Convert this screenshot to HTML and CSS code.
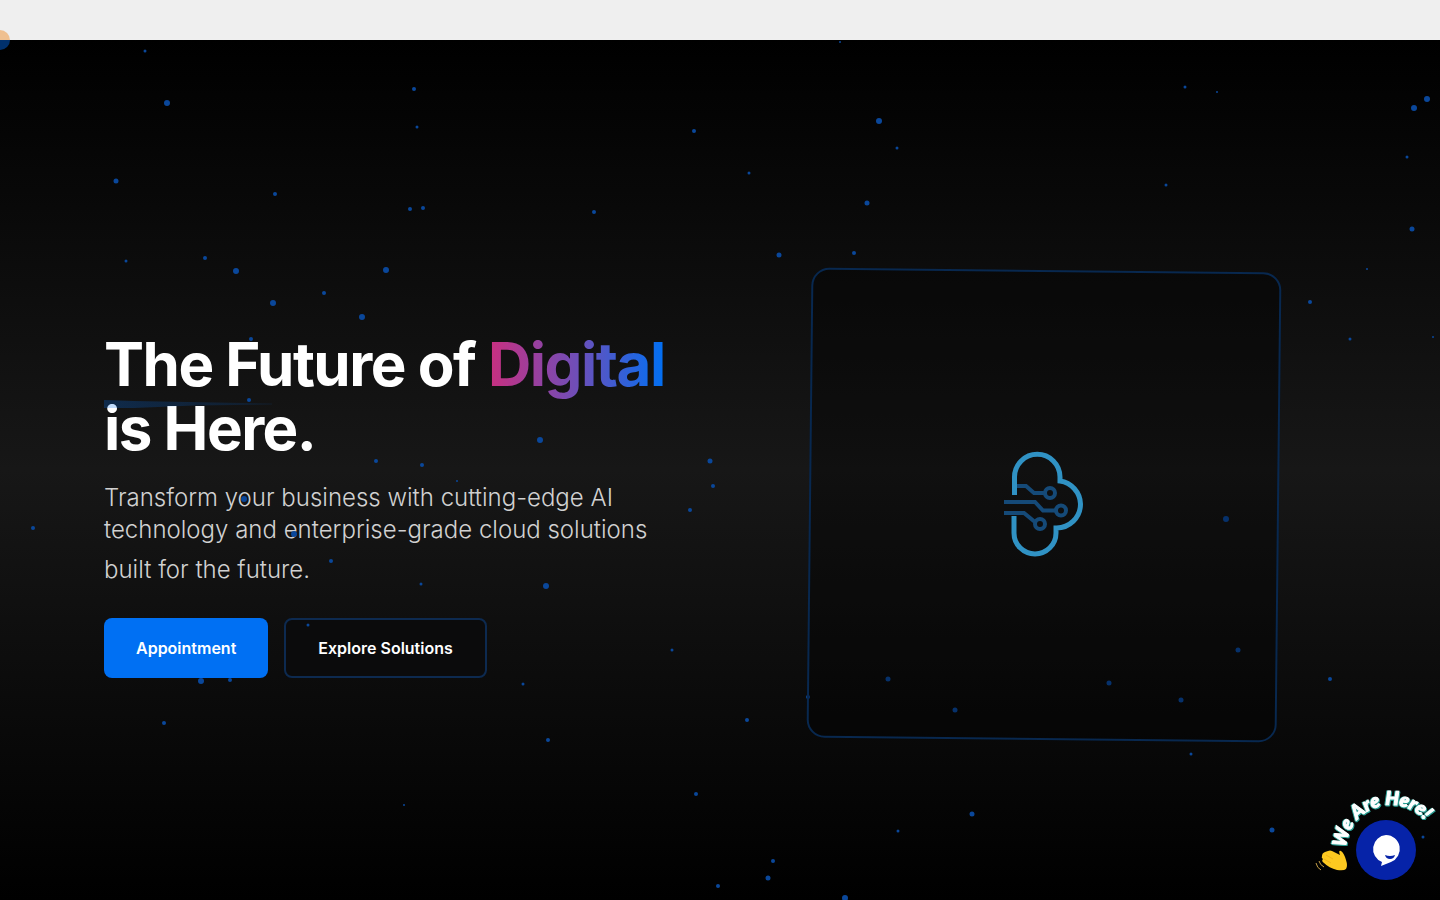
FILE: index.html
```
<!DOCTYPE html>
<html lang="en">

<head>
    <meta charset="UTF-8">
    <meta name="viewport" content="width=device-width, initial-scale=1.0">
    <title>The Future of Digital is Here.</title>
    <link rel="stylesheet" href="styles.css">
</head>

<body>
    <header class="topbar"></header>
    <span class="cursor-dot"></span>

    <main class="hero">
        <svg class="particles" id="particles" aria-hidden="true"></svg>

        <div class="container">
            <section class="intro">
                <h1>The Future of <span class="gradient-text">Digital</span><br>is Here.</h1>
                <svg class="streak" viewBox="0 0 176 8" aria-hidden="true">
                    <defs>
                        <linearGradient id="streakFill">
                            <stop offset="0" stop-color="#0070f3" stop-opacity=".25" />
                            <stop offset="1" stop-color="#0070f3" stop-opacity=".1" />
                        </linearGradient>
                    </defs>
                    <path d="M0 0L30 1L168 3.5L168 4.5L90 5.5L30 8H0Z" fill="url(#streakFill)" />
                </svg>
                <p class="lead">
                    Transform your business with cutting-edge AI technology and enterprise-grade cloud solutions
                    <span class="lead-end">built for the future.</span>
                </p>
                <div class="actions">
                    <button type="button" class="btn btn-primary">Appointment</button>
                    <button type="button" class="btn btn-outline">Explore Solutions</button>
                </div>
            </section>

            <section class="visual">
                <div class="card">
                    <svg class="logo" viewBox="0 0 80 104" fill="none" role="img" aria-label="Cloud logo">
                        <g stroke="#154a78" stroke-width="4">
                            <path d="M13 33H22L30 40H42" />
                            <circle cx="46" cy="40" r="5" />
                            <path d="M0 49H31L39 57.500H53" />
                            <circle cx="57" cy="57.500" r="5" />
                            <path d="M0 60H20L31 69" />
                            <circle cx="36" cy="71" r="5" />
                        </g>
                        <path d="M10.500 42V24A22.750 22.750 0 0 1 56 24V28A24 24 0 0 1 76.500 51A24 24 0 0 1 52 75V80A21 21 0 0 1 10 80V63" stroke="#3092c4" stroke-width="5" />
                    </svg>
                </div>
            </section>
        </div>
    </main>

    <div class="chat">
        <svg class="chat-label" viewBox="0 0 130 90" role="img" aria-label="We Are Here!">
            <path id="arc" d="M36 58A45 45 0 0 1 126 62L126 75" fill="none" />
            <text class="chat-text"><textPath href="#arc">We Are Here!</textPath></text>
            <g class="hand">
                <path d="M12 66Q12 63 15 62L18 61Q20 60 22 61L30 65Q28 60 31 61Q34 63 36 70Q38 76 36 79Q34 81 27 80Q19 78 14 73Q11 71 13 69Q11 68 12 66Z" fill="#fdc920" />
                <path d="M16 65L23 69M14 69L21 73" stroke="#f0b41a" fill="none" />
                <path d="M6 73Q7 78 11 80M9 71Q10 75 14 77" stroke="#c8a24a" fill="none" />
            </g>
        </svg>
        <button type="button" class="chat-btn" aria-label="Open chat">
            <svg viewBox="0 0 60 60" aria-hidden="true">
                <path d="M30 15A14 14 0 0 1 35 42L25 46L26 42A14 14 0 0 1 30 15Z" fill="#fff" />
                <path d="M29 35Q34 37 39 35Q38 39 34 39Q30 39 29 35Z" fill="#0623a8" />
            </svg>
        </button>
    </div>

    <script src="particles.js"></script>
</body>

</html>
```
FILE: styles.css
```
* {
    box-sizing: border-box;
}

body {
    margin: 0;
    background: #000;
    color: #fff;
    font-family: Inter, sans-serif;
    overflow-x: hidden;
}

.topbar {
    height: 40px;
    background: #efefef;
}

.cursor-dot {
    position: fixed;
    top: 30px;
    left: -10px;
    width: 20px;
    height: 20px;
    border-radius: 50%;
    background: linear-gradient(#efc090 50%, #00306c 50%);
    z-index: 5;
}

.hero {
    position: relative;
    display: flex;
    align-items: center;
    min-height: calc(100vh - 40px);
    padding-top: 70px;
    background: linear-gradient(#000, #171717 50%, #000);
    overflow: hidden;
}

.particles {
    position: absolute;
    inset: 0;
    width: 100%;
    height: 100%;
    fill: #0a479a;
    pointer-events: none;
    z-index: 2;
}

.container {
    display: grid;
    grid-template-columns: 1fr 1fr;
    gap: 64px;
    align-items: center;
    width: 100%;
    max-width: 1280px;
    margin: 0 auto;
    padding: 0 24px;
}

.intro {
    position: relative;
}

h1 {
    margin: 0 0 22px;
    font-size: 60px;
    line-height: 64px;
    font-weight: 700;
    letter-spacing: -0.025em;
}

.gradient-text {
    background: linear-gradient(90deg, #ca2f7f, #6f4eb8 50%, #0070f3);
    -webkit-background-clip: text;
    background-clip: text;
    color: transparent;
}

.streak {
    position: absolute;
    top: 68px;
    left: 0;
    width: 176px;
    height: 8px;
}

.lead {
    max-width: 576px;
    margin: 0 0 32px;
    font-size: 24px;
    line-height: 32px;
    font-weight: 300;
    color: #d1d1d1;
}

.lead-end {
    display: block;
    margin-top: 8px;
}

.actions {
    display: flex;
    gap: 16px;
}

.btn {
    height: 60px;
    padding: 0 32px;
    border: 0;
    border-radius: 8px;
    color: #fff;
    font: 600 16px/24px Inter, sans-serif;
    cursor: pointer;
}

.btn-primary {
    background: #0070f3;
}

.btn-outline {
    border: 2px solid #0d2a50;
    background: #0b0b0c;
}

.visual {
    position: relative;
    display: flex;
    justify-content: center;
    z-index: 3;
}

.card {
    display: flex;
    align-items: center;
    justify-content: center;
    width: 100%;
    max-width: 470px;
    aspect-ratio: 1;
    border: 2px solid #08284f;
    border-radius: 18px;
    background: rgba(0, 0, 0, 0.3);
    transform: rotate(0.6deg);
}

.logo {
    width: 80px;
    height: 104px;
    overflow: visible;
    transform: rotate(-0.6deg);
}

.chat {
    position: fixed;
    right: 0;
    bottom: 20px;
    width: 130px;
    height: 90px;
    z-index: 10;
}

.chat-label {
    position: absolute;
    inset: 0;
    overflow: visible;
}

.chat-text {
    font: italic 900 19px Lato, sans-serif;
    fill: #fff;
    stroke: #fff;
    stroke-width: 1px;
    filter: drop-shadow(1px 1px 0 #2a9d93) drop-shadow(-1px 0 0 #2a9d93);
}

.chat-btn {
    position: absolute;
    right: 24px;
    bottom: 0;
    width: 60px;
    height: 60px;
    padding: 0;
    border: 0;
    border-radius: 50%;
    background: #0623a8;
    cursor: pointer;
}

.chat-btn svg {
    display: block;
}
```
FILE: particles.js
```
// x, y and radius of each particle
const dots = [
    [145, 11, 1.5], [167, 63, 3], [116, 141, 2.5], [275, 154, 2], [414, 49, 2], [417, 87, 1.5],
    [410, 169, 2], [423, 168, 2], [594, 172, 2], [694, 91, 2], [749, 133, 1.5], [840, 2, 1],
    [879, 81, 3], [897, 108, 1.5], [867, 163, 2.5], [779, 215, 2.5], [854, 213, 2], [126, 221, 1.5],
    [205, 218, 2], [236, 231, 3], [273, 263, 3], [324, 253, 2], [386, 230, 3], [362, 277, 3],
    [251, 299, 2], [249, 360, 2], [376, 421, 2], [422, 425, 2], [457, 441, 1], [540, 400, 3],
    [710, 421, 2.5], [713, 446, 2], [690, 470, 2], [244, 459, 3], [294, 494, 3], [33, 488, 2],
    [331, 521, 2], [421, 544, 1.5], [546, 546, 3], [308, 585, 1.5], [672, 610, 1.5], [523, 644, 1.5],
    [201, 641, 3], [230, 640, 2], [164, 683, 2], [548, 700, 2], [747, 680, 2], [696, 754, 2],
    [404, 765, 1], [773, 821, 2], [768, 838, 2.5], [718, 846, 2], [845, 858, 3], [898, 791, 1.5],
    [972, 774, 2.5], [955, 670, 2.5], [888, 639, 2.5], [808, 657, 2], [1109, 643, 2.5], [1181, 660, 2.5],
    [1238, 610, 2.5], [1226, 479, 3], [1330, 639, 2], [1191, 714, 1.5], [1272, 790, 2.5], [1423, 797, 1.5],
    [1310, 262, 2], [1367, 229, 1], [1350, 299, 1.5], [1433, 297, 1], [1412, 189, 2.5], [1166, 145, 1.5],
    [1407, 117, 1.5], [1414, 68, 3], [1427, 59, 3], [1185, 47, 1.5], [1217, 52, 1]
];

const svg = document.getElementById('particles');

dots.forEach(([x, y, r]) => {
    const dot = document.createElementNS('http://www.w3.org/2000/svg', 'circle');
    dot.setAttribute('cx', x);
    dot.setAttribute('cy', y);
    dot.setAttribute('r', r);
    svg.appendChild(dot);
});
```
